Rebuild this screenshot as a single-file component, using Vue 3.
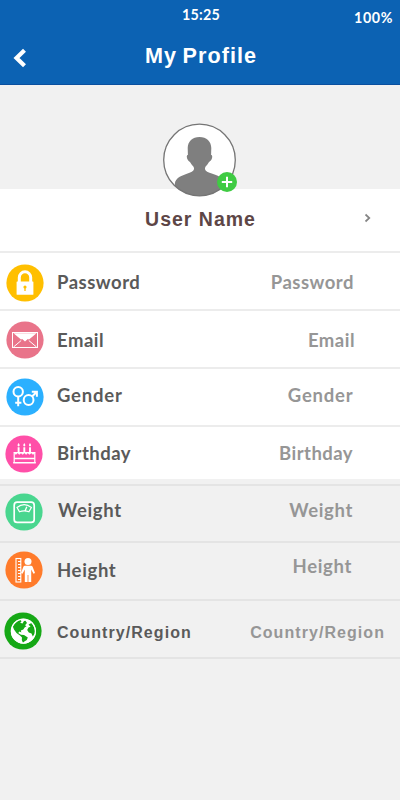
<script setup>
const rows = [
  { id: 'password', label: 'Password', color: '#ffbf00' },
  { id: 'email', label: 'Email', color: '#e9748a' },
  { id: 'gender', label: 'Gender', color: '#2bb0ff' },
  { id: 'birthday', label: 'Birthday', color: '#ff4fa8' },
  { id: 'weight', label: 'Weight', color: '#49d68f' },
  { id: 'height', label: 'Height', color: '#ff7b2b' },
  { id: 'country', label: 'Country/Region', color: '#16a816' },
]
</script>

<template>
  <main class="screen">
    <header class="header">
      <div class="status">
        <span class="time">15:25</span>
        <span class="battery">100%</span>
      </div>
      <div class="bar">
        <svg class="back" viewBox="0 0 14 20" width="14" height="20">
          <path d="M11.500 2.200 L3.500 10 L11.500 17.800" fill="none" stroke="#fff" stroke-width="4.200" />
        </svg>
        <h1 class="title">My Profile</h1>
      </div>
    </header>

    <section class="hero">
      <div class="avatar">
        <svg viewBox="0 0 74 74" width="74" height="74">
          <defs>
            <clipPath id="face"><circle cx="36.500" cy="37" r="36" /></clipPath>
          </defs>
          <circle cx="36.500" cy="37" r="35.800" fill="#fff" />
          <path
            clip-path="url(#face)"
            fill="#7f7f7f"
            d="M36.500 14 C43.500 14 48.300 18.500 48.300 25 L48.100 32 C49.700 32 49.500 35 48 37.300 C47 38.500 46.300 38.300 45.500 39.800 C44.500 42 42.500 43 42 45 C41.700 47.500 43.500 48.500 46.500 49.800 C54.500 52.500 61.500 54 62 63 L62 74 L11.500 74 L11.800 61 C12.500 54 19.500 52.500 26.500 49.800 C29.500 48.500 31.300 47.500 31 45 C30.500 43 28.500 42 27.500 39.800 C26.700 38.300 26 38.500 25 37.300 C23.500 35 23.300 32 24.900 32 L24.700 25 C24.700 18.500 29.500 14 36.500 14 Z"
          />
          <circle cx="36.500" cy="37" r="35.800" fill="none" stroke="#757575" stroke-width="1.300" />
        </svg>
        <svg class="add" viewBox="0 0 20 20" width="20" height="20">
          <circle cx="10" cy="10" r="10" fill="#3fcb43" />
          <path d="M10 4.800 V15.200 M4.800 10 H15.200" stroke="#fff" stroke-width="2" />
        </svg>
      </div>
    </section>

    <section class="name-row">
      <h2 class="name">User Name</h2>
      <svg class="chevron" viewBox="0 0 8 10" width="8" height="10">
        <path d="M1.500 1.500 L5.300 5 L1.500 8.500" fill="none" stroke="#858585" stroke-width="1.700" />
      </svg>
    </section>

    <ul class="list">
      <li v-for="row in rows" :key="row.id" class="row" :class="row.id">
        <svg class="icon" viewBox="0 0 38 38" width="38" height="38">
          <circle cx="19" cy="19" r="18.600" :fill="row.color" />
          <g v-if="row.id === 'password'">
            <path d="M13.300 19 V13.500 A5.700 5.700 0 0 1 24.700 13.500 V19" fill="none" stroke="#fff" stroke-width="3" />
            <rect x="10.600" y="17.500" width="16.800" height="13.200" rx=".5" fill="#fff" />
            <circle cx="19" cy="23" r="1.600" fill="#ffbf00" />
            <path d="M19 23 V27" stroke="#ffbf00" stroke-width="1.300" />
          </g>
          <g v-else-if="row.id === 'email'">
            <rect x="6.500" y="11.500" width="25" height="15" fill="none" stroke="#fff" stroke-width="1" />
            <path d="M7.500 12.200 L15 18.500 L16.200 17.900 L19 20.500 L21.800 17.900 L23 18.500 L30.500 12.200 Z" fill="#fff" />
            <path d="M7.500 26 L15.200 19.500 M30.500 26 L22.800 19.500" fill="none" stroke="#fff" stroke-width="1" />
          </g>
          <g v-else-if="row.id === 'gender'" fill="none" stroke="#fff" stroke-width="2">
            <circle cx="12.200" cy="13.800" r="4.700" />
            <path d="M12.200 18.500 V28.200 M9.200 24.800 H15.400" />
            <circle cx="22.600" cy="22" r="4.900" />
            <path d="M26.100 18.500 L30.800 13.800 M25.800 13.700 H30.900 V18.700" />
          </g>
          <g v-else-if="row.id === 'birthday'" fill="none" stroke="#fff" stroke-width="1.500">
            <path d="M9.200 28 V17.500 H29.800 V28" stroke-width="1.200" />
            <path d="M9.200 17.500 Q10.900 20.800 12.600 17.500 Q14.300 20.800 16 17.500 Q17.700 20.800 19.400 17.500 Q21.100 20.800 22.800 17.500 Q24.500 20.800 26.200 17.500 Q28 20.800 29.800 17.500" fill="#fff" stroke-width=".8" />
            <path d="M9.200 23.500 H29.800 M8.200 27.700 H30.800" />
            <path d="M13.600 12.200 V17 M19.300 12.200 V17 M25 12.200 V17" stroke-width="1.900" />
            <path d="M13.600 8 Q15.700 10.500 13.600 11.500 Q11.500 10.500 13.600 8 M19.300 8 Q21.400 10.500 19.300 11.500 Q17.200 10.500 19.300 8 M25 8 Q27.100 10.500 25 11.500 Q22.900 10.500 25 8" fill="#fff" stroke="none" />
          </g>
          <g v-else-if="row.id === 'weight'" fill="none" stroke="#fff">
            <rect x="9.200" y="9.200" width="20" height="20.200" rx="3" stroke-width="1.700" />
            <path d="M12 14.500 Q19.200 8.800 26.400 14.500 L23.900 18.800 Q19.200 16.900 14.500 18.800 Z" stroke-width="1.200" />
            <path d="M20 18 L21.800 13.800" stroke-width="1.300" />
          </g>
          <g v-else-if="row.id === 'height'">
            <rect x="11" y="7.500" width="4.800" height="23.500" fill="none" stroke="#fff" stroke-width="1.100" />
            <path d="M13 10.500 H16 M13 13.500 H16 M13 16.500 H16 M13 19.500 H16 M13 22.500 H16 M13 25.500 H16 M13 28.500 H16" stroke="#fff" stroke-width="1" />
            <circle cx="23" cy="10.500" r="3.500" fill="#fff" />
            <path d="M20 14.800 H26 Q27.300 14.800 27.700 16 L30 22 L28.500 22.700 L26.200 18.500 V31 H23.400 V24 H22.600 V31 H19.800 V18.500 L17.500 22.700 L16 22 L18.300 16 Q18.700 14.800 20 14.800 Z" fill="#fff" />
          </g>
          <g v-else>
            <circle cx="19.400" cy="19.200" r="12.500" fill="#fff" />
            <path d="M8.800 14.500 Q11 9.200 16.500 8 L17.500 9.300 L16.200 10.800 L18.500 11.500 L20 9 L21.500 8.800 L23 11 L21 13.200 L22.500 14.200 L20.800 15.200 L19.300 17.500 L16.800 18.500 L17.400 20.500 L15.500 19.600 L14.200 21 L17 22.700 L20 23 L23.800 25.500 L22.800 28 L20.300 29.600 L19 31 L17.800 28 L18 25.500 L16 23.500 L12.500 21 L10 17.500 Z" fill="#16a816" />
            <path d="M24.500 12.500 L27.500 11 Q31.600 15.500 30.800 21.500 L28.800 24.500 L27.500 21.500 L24.800 20.500 L23.200 18 L24.500 15.500 L26.500 14.700 Z" fill="#16a816" />
            <circle cx="19.400" cy="19.200" r="12" fill="none" stroke="#fff" stroke-width="1.200" />
          </g>
        </svg>
        <span class="label">{{ row.label }}</span>
        <span class="value">{{ row.label }}</span>
      </li>
    </ul>
  </main>
</template>

<style>
body {
  background: #f1f1f1;
}
</style>

<style scoped>
.screen {
  box-sizing: border-box;
  width: 400px;
  height: 800px;
  overflow: hidden;
  background: #f1f1f1;
  font-family: Lato, "Open Sans", sans-serif;
}

.header {
  box-sizing: border-box;
  height: 85px;
  background: #0c62b3;
  border-bottom: 1px solid #0a4f9f;
  color: #fff;
}

.status {
  display: grid;
  grid-template-columns: 1fr auto 1fr;
  height: 36px;
  font-size: 14.300px;
  font-weight: 700;
  line-height: 20px;
}

.time {
  grid-column: 2;
  padding: 5px 0 0 2px;
  letter-spacing: 0.200px;
}

.battery {
  justify-self: end;
  padding: 8px 7px 0 0;
  letter-spacing: 0.600px;
}

.bar {
  display: grid;
  grid-template-columns: 34px 1fr 34px;
  align-items: start;
}

.back {
  margin: 12px 0 0 13px;
}

.title {
  margin: 7px 0 0;
  padding-left: 2px;
  font: 700 21.600px/26px "Liberation Sans", sans-serif;
  letter-spacing: 1.050px;
  text-align: center;
  word-spacing: -1.500px;
}

.hero {
  display: flex;
  justify-content: center;
  height: 104px;
}

.avatar {
  position: relative;
  z-index: 1;
  width: 74px;
  height: 74px;
  margin-top: 38px;
}

.avatar > svg {
  display: block;
}

.avatar > .add {
  position: absolute;
  right: 0;
  bottom: 5px;
}

.name-row {
  box-sizing: border-box;
  display: grid;
  grid-template-columns: 36px 1fr 36px;
  height: 64px;
  background: #fff;
  border-bottom: 2px solid #ececec;
}

.name {
  grid-column: 2;
  margin: 18px 0 0;
  padding-left: 1px;
  color: #5d4646;
  font: 700 19.500px/24px "Liberation Sans", sans-serif;
  letter-spacing: 1px;
  text-align: center;
}

.chevron {
  margin-top: 24px;
}

.list {
  margin: 0;
  padding: 0;
  list-style: none;
}

.row {
  box-sizing: border-box;
  display: grid;
  grid-template-columns: 38px 1fr auto;
  align-items: start;
  height: 58px;
  padding: 0 46px 0 6px;
  background: #fff;
  border-bottom: 2px solid #ececec;
  font-size: 18.500px;
  font-weight: 700;
  line-height: 20px;
  letter-spacing: 0.500px;
}

.label {
  padding-left: 13px;
  color: #5a5a5a;
}

.value {
  color: #969696;
}

.icon {
  display: block;
}

.password .icon { margin-top: 11px; }
.password .label,
.password .value { margin-top: 19px; }

.email { padding-right: 45px; }
.email .icon { margin-top: 10px; }
.email .label,
.email .value { margin-top: 19px; }

.gender {
  padding-right: 46.500px;
  letter-spacing: 0.800px;
}
.gender .icon { margin-top: 9px; }
.gender .label,
.gender .value { margin-top: 16px; }

.birthday {
  height: 52px;
  padding: 0 47px 0 5px;
  border-bottom: 0;
  letter-spacing: 0.450px;
}
.birthday .icon { margin-top: 8px; }
.birthday .label { padding-left: 14px; }
.birthday .label,
.birthday .value { margin-top: 16px; }

.weight,
.height,
.country {
  background: transparent;
  border-color: #e4e4e4;
}

.weight {
  height: 64px;
  padding: 0 47px 0 5px;
  background: linear-gradient(#f1f1f1 5px, #e4e4e4 5px, #e4e4e4 7px, #f1f1f1 7px);
  letter-spacing: 0.650px;
}
.weight .icon { margin-top: 14px; }
.weight .label { padding-left: 15px; }
.weight .label,
.weight .value { margin-top: 21px; }

.height {
  padding: 0 48px 0 5px;
  letter-spacing: 0.650px;
}
.height .icon { margin-top: 8px; }
.height .label { padding-left: 14px; margin-top: 17px; }
.height .value { margin-top: 13px; }

.country {
  padding: 0 15px 0 4px;
  font: 700 16px/20px "Liberation Sans", sans-serif;
  letter-spacing: 1.060px;
}
.country .icon { margin-top: 11px; }
.country .label { padding-left: 15px; }
.country .label,
.country .value { margin-top: 22px; }
</style>
